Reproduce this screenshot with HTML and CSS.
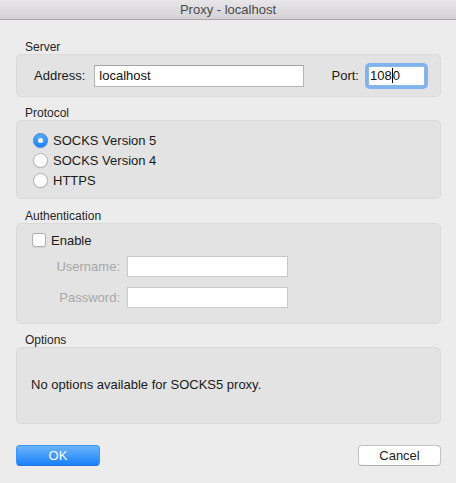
FILE: index.html
```html
<!DOCTYPE html>
<html>
<head>
<meta charset="utf-8">
<link rel="stylesheet" href="styles.css">
</head>
<body>
<div class="window">
  <div class="titlebar">Proxy - localhost</div>
  <div class="content">
    <div class="section">
      <div class="section-label">Server</div>
      <div class="box server">
        <span class="lbl">Address:</span>
        <div class="field addr">localhost</div>
        <span class="spacer"></span>
        <span class="lbl">Port:</span>
        <div class="field port focused">108<span class="caret"></span>0</div>
      </div>
    </div>
    <div class="section">
      <div class="section-label">Protocol</div>
      <div class="box protocol">
        <div class="row"><span class="radio on"></span><span>SOCKS Version 5</span></div>
        <div class="row"><span class="radio"></span><span>SOCKS Version 4</span></div>
        <div class="row"><span class="radio"></span><span>HTTPS</span></div>
      </div>
    </div>
    <div class="section auth-section">
      <div class="section-label">Authentication</div>
      <div class="box auth">
        <div class="row check-row"><span class="checkbox"></span><span>Enable</span></div>
        <div class="fields">
          <span class="lbl disabled">Username:</span>
          <div class="field dis"></div>
          <span class="lbl disabled">Password:</span>
          <div class="field dis"></div>
        </div>
      </div>
    </div>
    <div class="section">
      <div class="section-label">Options</div>
      <div class="box options">No options available for SOCKS5 proxy.</div>
    </div>
    <div class="buttons">
      <div class="btn primary">OK</div>
      <div class="btn">Cancel</div>
    </div>
  </div>
</div>
</body>
</html>
```
FILE: styles.css
```css
* { box-sizing: border-box; }
html, body { margin: 0; padding: 0; }
body {
  background: #ececec;
  font-family: "Liberation Sans", Arial, sans-serif;
  font-size: 13px;
  color: #1a1a1a;
  width: 456px;
  height: 483px;
  overflow: hidden;
}
.titlebar {
  height: 20px;
  line-height: 19px;
  text-align: center;
  color: #4a4a4a;
  background: linear-gradient(#e8e6e8, #d3d1d3);
  border-bottom: 1px solid #a8a8a8;
}
.content {
  padding: 20px 15px 0 16px;
  display: flex;
  flex-direction: column;
}
.section + .section { margin-top: 9px; }
.auth-section { margin-top: 10px !important; }
.section-label {
  font-size: 12px;
  line-height: 14px;
  height: 14px;
  padding-left: 9px;
  color: #262626;
}
.box {
  background: #e3e3e3;
  border: 1px solid #dadada;
  border-radius: 5px;
}
.server {
  height: 43px;
  display: flex;
  align-items: center;
  padding: 0 15px 0 17px;
}
.lbl { white-space: nowrap; }
.field {
  background: #fff;
  border: 1px solid #b4b4b4;
  border-top-color: #a4a4a4;
  line-height: 18px;
  padding-left: 4px;
  color: #111;
}
.addr { width: 210px; height: 22px; line-height: 20px; margin-left: 9px; }
.spacer { flex: 1; }
.port {
  width: 57px; height: 20px; margin-left: 9px;
  border-color: #8fb7e6;
  box-shadow: 0 0 0 3px #80b4ee;
  border-radius: 2px;
  padding-left: 1px;
}
.caret {
  display: inline-block;
  width: 1px;
  height: 15px;
  background: #000;
  vertical-align: -3px;
}
.protocol { height: 79px; padding: 9px 0 0 16px; }
.row { display: flex; align-items: center; height: 20px; }
.radio {
  width: 15px; height: 15px;
  border-radius: 50%;
  background: #fff;
  border: 1px solid #b1b1b1;
  box-shadow: 0 0.5px 1px rgba(0,0,0,0.1);
  margin-right: 5px;
  position: relative;
}
.radio.on {
  background: linear-gradient(#5aaafa, #1c84fa);
  border-color: #2f86e8;
}
.radio.on::after {
  content: "";
  position: absolute;
  left: 4px; top: 4px;
  width: 5px; height: 5px;
  border-radius: 50%;
  background: #fff;
}
.auth { height: 101px; padding: 6px 0 0 15px; }
.checkbox {
  width: 14px; height: 14px;
  background: #fff;
  border: 1px solid #b1b1b1;
  border-radius: 3px;
  margin-right: 5px;
  box-shadow: 0 0.5px 1px rgba(0,0,0,0.08);
}
.fields {
  margin-top: 6px;
  display: grid;
  grid-template-columns: 88px 161px;
  column-gap: 7px;
  row-gap: 10px;
  align-items: center;
}
.fields .lbl { text-align: right; }
.disabled { color: #a8a8a8; }
.dis { height: 21px; border-color: #cacaca; }
.options {
  height: 77px;
  display: flex;
  align-items: center;
  padding-left: 14px;
  padding-bottom: 2px;
}
.buttons {
  margin-top: 21px;
  display: flex;
  justify-content: space-between;
}
.btn {
  height: 21px;
  width: 83px;
  text-align: center;
  line-height: 19px;
  background: #fff;
  border: 1px solid #c2c2c2;
  border-bottom-color: #aeaeae;
  border-radius: 4px;
  color: #1e1e1e;
}
.btn.primary {
  width: 84px;
  color: #fff;
  background: linear-gradient(#6cb3fa, #1a82fb);
  border-color: #3f95f5;
  border-bottom-color: #2476e0;
}
```
